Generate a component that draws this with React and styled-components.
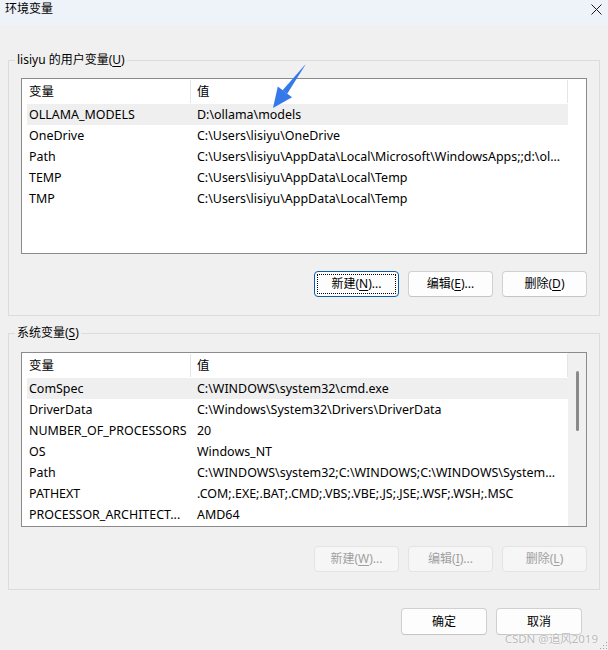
import React from 'react'
import styled, { createGlobalStyle } from 'styled-components'

const GlobalStyle = createGlobalStyle`
  html, body { margin: 0; padding: 0; background: #f0f0f0; }
  * { box-sizing: border-box; }
`

const font = `"Noto Sans", "Noto Sans CJK SC", sans-serif`

const Window = styled.div`
  position: relative;
  width: 608px;
  height: 650px;
  background: #f0f0f0;
  display: flex;
  flex-direction: column;
  overflow: hidden;
  font-family: ${font};
  font-size: 12px;
  color: #000;
`

const TitleBar = styled.div`
  height: 25px;
  flex: none;
  background: #eef2f9;
  display: flex;
  justify-content: space-between;
  align-items: flex-start;
  padding: 1px 6px 0 5px;
`

const Title = styled.div`
  line-height: 16px;
`

const CloseIcon = styled.svg`
  margin-top: 3px;
`

const Body = styled.div`
  flex: 1;
  padding: 35px 8px 0 8px;
  display: flex;
  flex-direction: column;
`

const Group = styled.div`
  border: 1px solid #dcdcdc;
  padding: 0 12px ${p => p.$bottom}px 12px;
  margin-top: ${p => p.$top || 0}px;
  display: flex;
  flex-direction: column;
`

const Caption = styled.div`
  margin: -9px 0 0 -6px;
  padding: 0 2px;
  line-height: 16px;
  background: #f0f0f0;
  align-self: flex-start;
`

const Mnemonic = styled.span`
  text-decoration: underline;
  text-underline-offset: 2px;
`

const ListBox = styled.div`
  margin-top: ${p => p.$gap}px;
  height: ${p => p.$height}px;
  border: 1px solid #8b8b8b;
  background: #fff;
  display: flex;
`

const Table = styled.div`
  width: 546px;
  flex: none;
  display: flex;
  flex-direction: column;
  font-size: 12.45px;
`

const HeaderRow = styled.div`
  height: 25px;
  display: flex;
  line-height: 25px;
`

const HeaderCell = styled.div`
  width: ${p => (p.$wide ? 'auto' : '169px')};
  flex: ${p => (p.$wide ? 1 : 'none')};
  padding-left: ${p => (p.$wide ? 6 : 7)}px;
  position: relative;
  &::after {
    content: '';
    position: absolute;
    right: 0;
    top: 1px;
    bottom: 1px;
    width: 1px;
    background: #e5e5e5;
  }
`

const Row = styled.div`
  margin-left: 5px;
  height: 21px;
  line-height: 21px;
  display: flex;
  background: ${p => (p.$selected ? '#efefef' : 'transparent')};
`

const Cell = styled.div`
  width: ${p => (p.$wide ? 'auto' : '163px')};
  flex: ${p => (p.$wide ? 1 : 'none')};
  padding-left: ${p => (p.$wide ? 7 : 2)}px;
  white-space: nowrap;
  overflow: hidden;
`

const Scrollbar = styled.div`
  flex: 1;
  background: ${p => (p.$visible ? '#f0f0f0' : '#fff')};
  display: flex;
  justify-content: center;
  padding-top: 18px;
`

const Thumb = styled.div`
  width: 3px;
  height: 60px;
  border-radius: 2px;
  background: #8a8a8a;
`

const ButtonRow = styled.div`
  margin-top: ${p => p.$gap}px;
  display: flex;
  justify-content: flex-end;
  gap: 9px;
  padding-right: ${p => p.$right || 0}px;
`

const Button = styled.button`
  width: ${p => p.$width || 85}px;
  height: ${p => p.$height || 26}px;
  font-family: ${font};
  font-size: 12px;
  line-height: 16px;
  padding: 0;
  color: #000;
  background: #fdfdfd;
  border: 1px solid #d0d0d0;
  border-bottom-color: #c4c4c4;
  border-radius: 4px;
  outline: ${p => (p.$focused ? '1px dotted #000' : 'none')};
  outline-offset: -4px;
  ${p => p.$focused && 'border-color: #0b5cad;'}
  &:disabled {
    color: #a0a0a0;
    background: #f6f6f6;
    border-color: #e3e3e3;
  }
`

const Footer = styled(ButtonRow)``

const Watermark = styled.div`
  position: absolute;
  right: 10px;
  bottom: 4px;
  font-size: 11.5px;
  color: rgba(170, 170, 170, 0.85);
  text-shadow: 0 0 2px #fff, 0 0 1px #fff;
`

const Pointer = styled.svg`
  position: absolute;
  left: 260px;
  top: 55px;
`

const Grip = styled.svg`
  position: absolute;
  right: 0;
  bottom: 0;
`

const userVars = [
  ['OLLAMA_MODELS', 'D:\\ollama\\models'],
  ['OneDrive', 'C:\\Users\\lisiyu\\OneDrive'],
  ['Path', 'C:\\Users\\lisiyu\\AppData\\Local\\Microsoft\\WindowsApps;;d:\\ol...'],
  ['TEMP', 'C:\\Users\\lisiyu\\AppData\\Local\\Temp'],
  ['TMP', 'C:\\Users\\lisiyu\\AppData\\Local\\Temp'],
]

const systemVars = [
  ['ComSpec', 'C:\\WINDOWS\\system32\\cmd.exe'],
  ['DriverData', 'C:\\Windows\\System32\\Drivers\\DriverData'],
  ['NUMBER_OF_PROCESSORS', '20'],
  ['OS', 'Windows_NT'],
  ['Path', 'C:\\WINDOWS\\system32;C:\\WINDOWS;C:\\WINDOWS\\System...'],
  ['PATHEXT', '.COM;.EXE;.BAT;.CMD;.VBS;.VBE;.JS;.JSE;.WSF;.WSH;.MSC'],
  ['PROCESSOR_ARCHITECT...', 'AMD64'],
]

function VarList({ vars, gap, height, scroll }) {
  return (
    <ListBox $gap={gap} $height={height}>
      <Table>
        <HeaderRow>
          <HeaderCell>变量</HeaderCell>
          <HeaderCell $wide>值</HeaderCell>
        </HeaderRow>
        {vars.map(([name, value], i) => (
          <Row key={name + i} $selected={i === 0}>
            <Cell>{name}</Cell>
            <Cell $wide>{value}</Cell>
          </Row>
        ))}
      </Table>
      <Scrollbar $visible={scroll}>{scroll && <Thumb />}</Scrollbar>
    </ListBox>
  )
}

function App() {
  return (
    <Window>
      <GlobalStyle />
      <TitleBar>
        <Title>环境变量</Title>
        <CloseIcon width="11" height="11" viewBox="0 0 11 11">
          <path d="M0.5 0.5 L10.5 10.5 M10.5 0.5 L0.5 10.5" stroke="#1a1a1a" strokeWidth="1" />
        </CloseIcon>
      </TitleBar>
      <Body>
        <Group $bottom={18}>
          <Caption>lisiyu 的用户变量(<Mnemonic>U</Mnemonic>)</Caption>
          <VarList vars={userVars} gap={10} height={176} />
          <ButtonRow $gap={17}>
            <Button $focused>新建(<Mnemonic>N</Mnemonic>)...</Button>
            <Button>编辑(<Mnemonic>E</Mnemonic>)...</Button>
            <Button>删除(<Mnemonic>D</Mnemonic>)</Button>
          </ButtonRow>
        </Group>
        <Group $top={17} $bottom={17}>
          <Caption>系统变量(<Mnemonic>S</Mnemonic>)</Caption>
          <VarList vars={systemVars} gap={11} height={175} scroll />
          <ButtonRow $gap={19}>
            <Button disabled>新建(<Mnemonic>W</Mnemonic>)...</Button>
            <Button disabled>编辑(<Mnemonic>I</Mnemonic>)...</Button>
            <Button disabled>删除(<Mnemonic>L</Mnemonic>)</Button>
          </ButtonRow>
        </Group>
        <Footer $gap={18} $right={18}>
          <Button $width={86} $height={27}>确定</Button>
          <Button $width={86} $height={27}>取消</Button>
        </Footer>
      </Body>

      <Pointer width="60" height="60" viewBox="0 0 60 60">
        <polygon
          points="45.6,9.4 44.4,10.6 22.6,35.2 27.2,38.8"
          fill="#3478ea"
        />
        <polygon points="13,53 17.8,31.4 32,42.2" fill="#3478ea" />
      </Pointer>

      <Watermark>CSDN @追风2019</Watermark>

      <Grip width="8" height="8" viewBox="0 0 8 8">
        <rect x="6" y="0" width="1" height="1" fill="#a0a0a0" />
        <rect x="3" y="3" width="1" height="1" fill="#a0a0a0" />
        <rect x="6" y="3" width="1" height="1" fill="#a0a0a0" />
        <rect x="0" y="6" width="1" height="1" fill="#a0a0a0" />
        <rect x="3" y="6" width="1" height="1" fill="#a0a0a0" />
        <rect x="6" y="6" width="1" height="1" fill="#a0a0a0" />
      </Grip>
    </Window>
  )
}

export default App
